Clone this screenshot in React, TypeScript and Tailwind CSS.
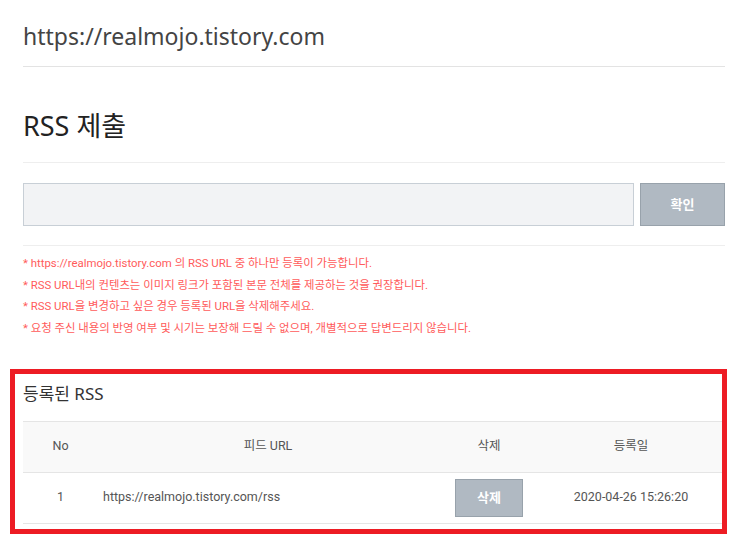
import React from 'react';

const notes = [
  '* https://realmojo.tistory.com 의 RSS URL 중 하나만 등록이 가능합니다.',
  '* RSS URL내의 컨텐츠는 이미지 링크가 포함된 본문 전체를 제공하는 것을 권장합니다.',
  '* RSS URL을 변경하고 싶은 경우 등록된 URL을 삭제해주세요.',
  '* 요청 주신 내용의 반영 여부 및 시기는 보장해 드릴 수 없으며, 개별적으로 답변드리지 않습니다.',
];

export default function App() {
  return (
    <div className="w-[742px] h-[556px] overflow-hidden bg-white pl-[23px] pr-[17px] font-['Noto_Sans','Noto_Sans_CJK_KR',sans-serif] text-[#333]">
      {/* blog url */}
      <div className="h-[67px] border-b border-[#e3e3e3] flex items-center pt-[6px]">
        <h2 className="text-[23px] text-[#444] leading-none">https://realmojo.tistory.com</h2>
      </div>

      {/* RSS submit */}
      <div className="h-[96px] border-b border-[#eeeeee] flex items-center pt-[21px]">
        <h1 className="text-[27px] text-[#222] leading-none">RSS 제출</h1>
      </div>

      <div className="h-[83px] border-b border-[#eeeeee] flex items-start pt-[20px] gap-[6px]">
        <input className="w-[611px] h-[43px] bg-[#f2f3f5] border border-[#c8cfd6] outline-none px-3" />
        <button className="w-[85px] h-[43px] bg-[#b0b9c2] border border-[#98a2ab] text-white text-[13px] font-bold">확인</button>
      </div>

      <ul className="pt-[7px] font-['Roboto','Noto_Sans_CJK_KR',sans-serif] text-[11.4px] text-[#ff5b5b] leading-[21.7px]">
        {notes.map(n => <li key={n}>{n}</li>)}
      </ul>

      {/* registered */}
      <div className="mt-[29px] ml-[-13px] mr-[-2px] h-[165px] border-[5px] border-[#ed1c24] pl-[8px] font-['Roboto','Noto_Sans_CJK_KR',sans-serif]">
        <div className="h-[47px] flex items-center pb-[7px]">
          <h3 className="text-[17px] text-[#333] font-['Noto_Sans','Noto_Sans_CJK_KR',sans-serif]">등록된 RSS</h3>
        </div>
        <table className="w-full table-fixed text-[12.5px] text-[#555] border-collapse">
          <thead>
            <tr className="h-[51px] bg-[#f9f9f9] border-y border-[#e5e5e5]">
              <th className="w-[75px] font-normal">No</th>
              <th className="w-[340px] font-normal">피드 URL</th>
              <th className="w-[102px] font-normal">삭제</th>
              <th className="font-normal">등록일</th>
            </tr>
          </thead>
          <tbody>
            <tr className="h-[51px] border-b border-[#e5e5e5]">
              <td className="text-center">1</td>
              <td className="pl-[5px]">https://realmojo.tistory.com/rss</td>
              <td className="text-center">
                <button className="w-[68px] h-[38px] bg-[#b0b9c2] border border-[#98a2ab] text-white text-[13px] font-bold align-middle">삭제</button>
              </td>
              <td className="text-center whitespace-nowrap">2020-04-26 15:26:20</td>
            </tr>
          </tbody>
        </table>
      </div>
    </div>
  );
}
